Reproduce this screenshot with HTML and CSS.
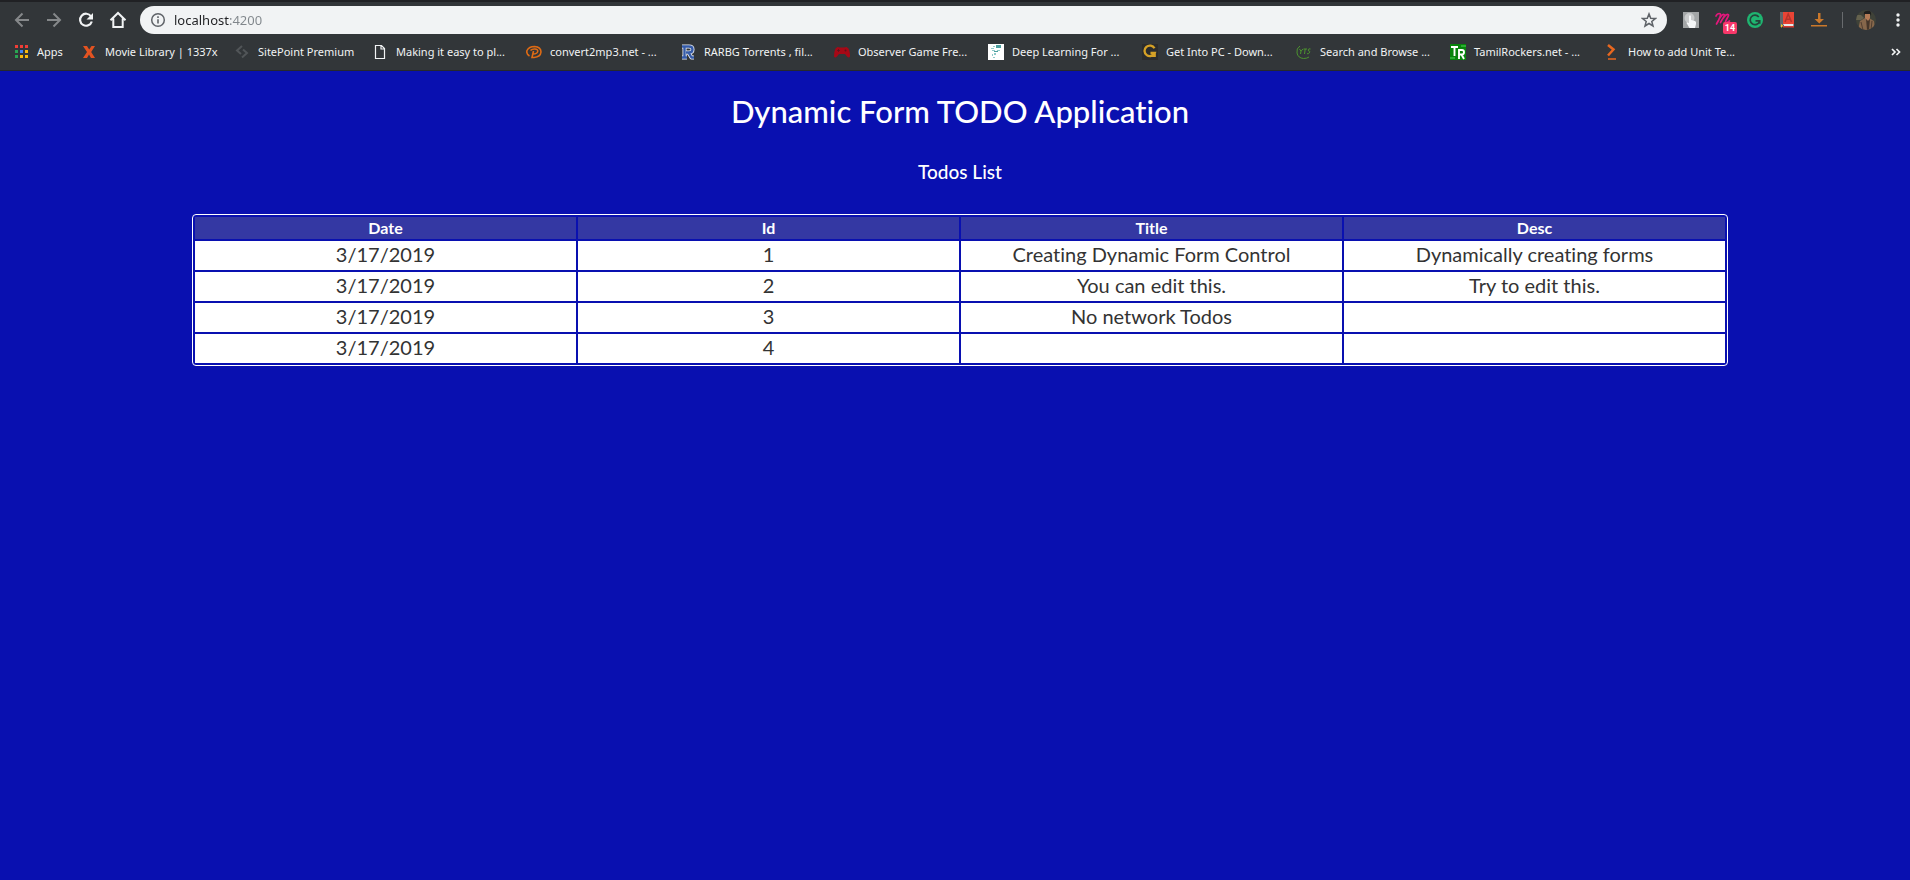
FILE: index.html
```html
<!DOCTYPE html>
<html lang="en">
<head>
<meta charset="utf-8">
<title>Dynamic Form TODO Application</title>
<link rel="stylesheet" href="styles.css">
</head>
<body>
<header class="browser">
  <div class="toolbar">
    <nav class="nav" aria-label="Navigation">
      <button class="icon-btn dim" aria-label="Back"><svg width="16" height="16" viewBox="0 0 16 16" fill="none" stroke="currentColor" stroke-width="2"><path d="M15 8H2M8.500 1.500L2 8l6.500 6.500"/></svg></button>
      <button class="icon-btn dim" aria-label="Forward"><svg width="16" height="16" viewBox="0 0 16 16" fill="none" stroke="currentColor" stroke-width="2"><path d="M1 8h13M7.500 1.500L14 8l-6.500 6.500"/></svg></button>
      <button class="icon-btn" aria-label="Reload"><svg width="16" height="16" viewBox="0 0 16 16"><path d="M13 4.300A6 6 0 1 0 13.800 9.500" fill="none" stroke="currentColor" stroke-width="2.200"/><path d="M15 1v6.500H8.500z" fill="currentColor"/></svg></button>
      <button class="icon-btn" aria-label="Home"><svg width="18" height="18" viewBox="0 0 18 18" fill="none" stroke="currentColor" stroke-width="2"><path d="M1.500 9.300L9 2l7.500 7.300M4.300 7.500V16h9.400V7.500"/></svg></button>
    </nav>
    <div class="omnibox">
      <button class="icon-btn grey" aria-label="Site information"><svg width="16" height="16" viewBox="0 0 16 16"><circle cx="8" cy="8" r="6.300" fill="none" stroke="currentColor" stroke-width="1.500"/><path d="M7.200 7.200h1.600v4.300H7.200zM7.200 4.300h1.600v1.600H7.200z" fill="currentColor"/></svg></button>
      <input class="address" type="text" value="localhost:4200" aria-label="Address">
      <button class="icon-btn grey" aria-label="Bookmark this page"><svg width="16" height="16" viewBox="0 0 16 16" fill="none" stroke="currentColor" stroke-width="1.500"><path d="M8 1.900l1.700 4.300 4.700.3-3.600 3 1.200 4.500L8 11.500 4 14l1.200-4.500-3.600-3 4.700-.3z"/></svg></button>
    </div>
    <div class="extensions">
      <button class="icon-btn" aria-label="Touch extension"><svg width="16" height="16" viewBox="0 0 16 16"><path d="M0 0h16v16H0z" fill="#a3a6a7"/><circle cx="6.500" cy="6" r="5" fill="#c9cbcc"/><path d="M6 4q1-1.500 2 0v4l4 1q1.500.5 1 3l-1 4H6.500L3.500 11q0-1.500 2.500 0z" fill="#f4f6f7"/></svg></button>
      <button class="icon-btn badge-host" aria-label="Momentum, 14 items"><svg width="18" height="16" viewBox="0 0 18 16" fill="none" stroke="#e3177b" stroke-width="1.700" stroke-linecap="round" stroke-linejoin="round"><path d="M2 4q1-2.500 3.500-2.500C8 1.500 5.500 7 2.500 12 5 7 8 2 10 2.500S8 7 6.500 10.500C9 6 12 2 14 2.500S12 7 11.500 10q.5 2 4-1"/></svg><span class="badge">14</span></button>
      <button class="icon-btn" aria-label="Grammar checker"><svg width="16" height="16" viewBox="0 0 16 16"><circle cx="8" cy="8" r="8" fill="#1fb571"/><path d="M11.800 5A4.800 4.800 0 1 0 12.500 9.500M8.500 8.800h4.200v3" fill="none" stroke="#24443a" stroke-width="1.700"/></svg></button>
      <button class="icon-btn" aria-label="Dictionary"><svg width="16" height="16" viewBox="0 0 16 16"><path d="M1 0h3v15H1z" fill="#60656a"/><path d="M4 0h11v12H4z" fill="#e94435"/><path d="M4 12h10.500v2H5z" fill="#e8e8e8"/><path d="M4 14h11v1.500H4z" fill="#d83a30"/><path d="M6 10l3.200-8 3.300 8M7.200 7.300h4" fill="none" stroke="#b5332b" stroke-width="1.500"/><path d="M2 12l2 1.500L2 16z" fill="#f6c928"/></svg></button>
      <button class="icon-btn" aria-label="Downloads"><svg width="16" height="16" viewBox="0 0 16 16" fill="#ca782b"><path d="M7 1h2.500v6H13l-4.700 4.500L3.500 7H7zM0 13h16v1.500H0z"/></svg></button>
      <span class="divider"></span>
      <button class="icon-btn" aria-label="Profile"><svg width="20" height="20" viewBox="0 0 20 20"><clipPath id="face"><circle cx="10" cy="10" r="10"/></clipPath><g clip-path="url(#face)"><path d="M0 0h20v20H0z" fill="#3f4238"/><path d="M0 5h5l3 3-3 2H0z" fill="#65624e"/><path d="M2 20L4 11l5-3h4l5 3 1 9z" fill="#86674b"/><path d="M9 3h5v5l-2 3-3-3z" fill="#b57c56"/><path d="M8 5q-1-4 3-4 5-1 4 5l-1-2H9z" fill="#201f1d"/><path d="M10 9l2 2 2-2-1 11h-2z" fill="#46362a"/><path d="M5 12l2 8M16 11l-1 9" stroke="#503e30" fill="none"/></g></svg></button>
      <button class="icon-btn menu" aria-label="Menu"><svg width="4" height="16" viewBox="0 0 4 16" fill="currentColor"><circle cx="2" cy="3" r="1.700"/><circle cx="2" cy="8" r="1.700"/><circle cx="2" cy="13" r="1.700"/></svg></button>
    </div>
  </div>
  <nav class="bookmarks" aria-label="Bookmarks">
    <a class="bookmark apps" href="#"><svg width="16" height="16" viewBox="0 0 16 16"><path d="M2 1h3v3H2zM7 1h3v3H7zM12 1h3v3h-3z" fill="#f03e37"/><path d="M2 6h3v3H2z" fill="#2aa552"/><path d="M7 6h3v3H7z" fill="#4285f4"/><path d="M12 6h3v3h-3z" fill="#f9b90b"/><path d="M2 11h3v3H2z" fill="#2aa552"/><path d="M7 11h3v3H7zM12 11h3v3h-3z" fill="#f9b90b"/></svg>Apps</a>
    <a class="bookmark movies" href="#"><svg width="16" height="16" viewBox="0 0 16 16"><path d="M2 2h4l2.200 3.500L10.500 2H14l-3.800 6 3.800 6h-4l-2-3.500L6 14H2l4-6z" fill="#e35321"/></svg>Movie Library | 1337x</a>
    <a class="bookmark sitepoint" href="#"><svg width="16" height="16" viewBox="0 0 16 16" fill="none" stroke="#515558" stroke-width="2"><path d="M8 2L3 6.500l4 3.500M9 5.500l4 3.500-5 4.500"/></svg>SitePoint Premium</a>
    <a class="bookmark" href="#"><svg width="16" height="16" viewBox="0 0 16 16" fill="none" stroke="#f1f3f4" stroke-width="1.200"><path d="M3.500 1.500h6l3 3v10h-9zM9 1.500V5h3.500"/></svg>Making it easy to pl...</a>
    <a class="bookmark" href="#"><svg width="16" height="16" viewBox="0 0 16 16" fill="none" stroke="#df6b14" stroke-width="1.600"><path d="M3.500 12Q0 10 1 6.500 3 2.500 8.500 2.500 15 3 15 8q-.5 5-7 5.500H6l1.500-6.500M4.500 6.500Q6 4.800 9 5t2.700 2.500T7 10"/></svg>convert2mp3.net - ...</a>
    <a class="bookmark" href="#"><svg width="16" height="16" viewBox="0 0 16 16" fill="none" stroke-linejoin="round"><path d="M2 2.500h7q3.500 0 3.500 3T9 8.500H6M4.500 3v10.500M2 13.500h5M8.500 8.500l3 5H14" stroke="#e9edf6" stroke-width="4"/><path d="M2 2.500h7q3.500 0 3.500 3T9 8.500H6M4.500 3v10.500M2 13.500h5M8.500 8.500l3 5H14" stroke="#355ba8" stroke-width="2.400"/></svg>RARBG Torrents , fil...</a>
    <a class="bookmark" href="#"><svg width="16" height="16" viewBox="0 0 16 16"><path d="M3.500 3l2.500.6h4l2.500-.6 2 1.500q1.800 4 1.500 8-1 2-3 0L11 10H5l-2 2.500q-2 2-3 0 0-5 1.500-8z" fill="#a60816"/><path d="M4.500 5v3M3 6.500h3" stroke="#5d131c" stroke-width=".8"/><circle cx="11.500" cy="6.500" r="1" fill="#5d131c"/></svg>Observer Game Fre...</a>
    <a class="bookmark" href="#"><svg width="16" height="16" viewBox="0 0 16 16"><path d="M0 0h16v16H0z" fill="#fff"/><path d="M8 1h5v3H8zM6 7h4v1H6z" fill="#4d9f9f"/><path d="M5 2h2v1H5zM3 4h3v1H3zM4 6h3v1H4zM9 6h3v1H9zM6 9h2v2H6zM4 10h1v2H4zM5 13h2v1H5z" fill="#8fcac9"/></svg>Deep Learning For ...</a>
    <a class="bookmark" href="#"><svg width="16" height="16" viewBox="0 0 16 16"><path d="M0 0h16v16H0z" fill="#2b2c2d"/><path d="M12.500 4.300A5.300 5.300 0 1 0 12.700 9H8.500M12.700 8v5" fill="none" stroke="#d5a126" stroke-width="2.300"/></svg>Get Into PC - Down...</a>
    <a class="bookmark" href="#"><svg width="16" height="16" viewBox="0 0 16 16" fill="none" stroke="#4c942f"><path d="M4 2Q0 4.500 1 9q1 5 6.500 5.500 3.500 0 5.500-1.500" stroke-width="1"/><path d="M3.500 5l1.500 2.200L7 5M5 7.200L4.500 10M7.500 5h3.500M9.200 5l-.7 5M14.500 5q-2-.7-2.200.8t1.200 1.500-1 2.400H11"/></svg>Search and Browse ...</a>
    <a class="bookmark" href="#"><svg width="16" height="16" viewBox="0 0 16 16"><path d="M0 0h16v16H0z" fill="#07830c"/><path d="M11 1h5v2h-5zM0 13h5v2H0z" fill="#2aac31"/><path d="M1 3h7M4.500 3v9M9 15V6h3q2 0 2 2.200T12 10.500H9M11.500 10.500l2.500 4.500" fill="none" stroke="#fff" stroke-width="1.900"/></svg>TamilRockers.net - ...</a>
    <a class="bookmark" href="#"><svg width="16" height="16" viewBox="0 0 16 16" fill="none" stroke="#e8671f" stroke-width="2"><path d="M4 1l5.500 4.500L4 11.500" stroke-width="2.500"/><path d="M4 15h8" stroke-width="1.500"/></svg>How to add Unit Te...</a>
    <button class="icon-btn more" aria-label="More bookmarks"><svg width="10" height="8" viewBox="0 0 10 8" fill="none" stroke="currentColor" stroke-width="1.700"><path d="M1 1l3 3-3 3M5.500 1l3 3-3 3"/></svg></button>
  </nav>
</header>
<main class="page">
  <h1 class="title">Dynamic Form TODO Application</h1>
  <h2 class="subtitle">Todos List</h2>
  <table class="todos">
    <thead><tr><th>Date</th><th>Id</th><th>Title</th><th>Desc</th></tr></thead>
    <tbody>
      <tr><td>3/17/2019</td><td>1</td><td>Creating Dynamic Form Control</td><td>Dynamically creating forms</td></tr>
      <tr><td>3/17/2019</td><td>2</td><td>You can edit this.</td><td>Try to edit this.</td></tr>
      <tr><td>3/17/2019</td><td>3</td><td>No network Todos</td><td></td></tr>
      <tr><td>3/17/2019</td><td>4</td><td></td><td></td></tr>
    </tbody>
  </table>
</main>
</body>
</html>
```
FILE: styles.css
```css
* { box-sizing: border-box; }

body {
  margin: 0;
  min-height: 100vh;
  background: #0910b0;
  font-family: Lato, "Liberation Sans", sans-serif;
  font-variant-ligatures: none;
}

svg { display: block; flex: none; }

.browser {
  background: #323639;
  border-top: 2px solid #202124;
  border-bottom: 1px solid #26292c;
  color: #f1f3f4;
  font-family: "Noto Sans", sans-serif;
}

.toolbar {
  display: flex;
  align-items: center;
  height: 36px;
  padding: 0 0 0 6px;
}

.nav { display: flex; width: 134px; }

.icon-btn {
  display: flex;
  align-items: center;
  justify-content: center;
  width: 32px;
  height: 28px;
  padding: 0;
  border: 0;
  background: none;
  color: inherit;
  font: inherit;
}

.dim { color: #85888a; }
.grey { color: #5f6368; }

.omnibox {
  display: flex;
  flex: 1;
  align-items: center;
  height: 28px;
  padding: 0 2px;
  border-radius: 14px;
  background: #f1f3f4;
}

.address {
  flex: 1;
  min-width: 0;
  padding: 0;
  border: 0;
  outline: 0;
  background: linear-gradient(90deg, #202124 56px, #80868b 56px);
  background-clip: text;
  -webkit-background-clip: text;
  color: transparent;
  font: 13px/20px "Noto Sans", sans-serif;
}

.extensions {
  display: flex;
  align-items: center;
  padding-left: 8px;
}

.badge-host { position: relative; }

.badge {
  position: absolute;
  right: 2px;
  bottom: 0;
  width: 14px;
  border-radius: 2px;
  background: #f8386a;
  color: #fff;
  font: bold 9px/12px Roboto, sans-serif;
  text-align: center;
}

.divider { width: 1px; height: 16px; margin: 0 7px; background: #686b6e; }

.menu { width: 24px; margin-left: 4px; }

.bookmarks {
  display: flex;
  align-items: center;
  height: 32px;
  padding: 0 4px 4px 13px;
}

.bookmark {
  display: flex;
  flex: none;
  align-items: center;
  gap: 8px;
  width: 154px;
  color: #f1f3f4;
  font-size: 11px;
  line-height: 16px;
  text-decoration: none;
  white-space: nowrap;
}

.apps { width: 68px; }
.movies { width: 153px; }
.sitepoint { width: 138px; }

.more { width: 20px; margin-left: auto; }

.page {
  padding: 20px 0 20px 10px;
  color: #fff;
  text-align: center;
}

.title {
  margin: 0;
  font-size: 31px;
  font-weight: 500;
  line-height: 40px;
}

.subtitle {
  margin: 31px 0 32px;
  font-size: 19px;
  font-weight: 500;
  line-height: 20px;
}

.todos {
  width: calc(100% - 364px);
  margin: 0 auto;
  border: 1px solid #fff;
  border-radius: 4px;
  border-spacing: 2px;
  table-layout: fixed;
}

.todos th {
  height: 22px;
  padding: 0;
  background: #3438a3;
  font-size: 16px;
  line-height: 20px;
}

.todos td {
  height: 29px;
  padding: 0 0 3px;
  background: #fff;
  color: #333;
  font-size: 20px;
  line-height: 26px;
}
```
